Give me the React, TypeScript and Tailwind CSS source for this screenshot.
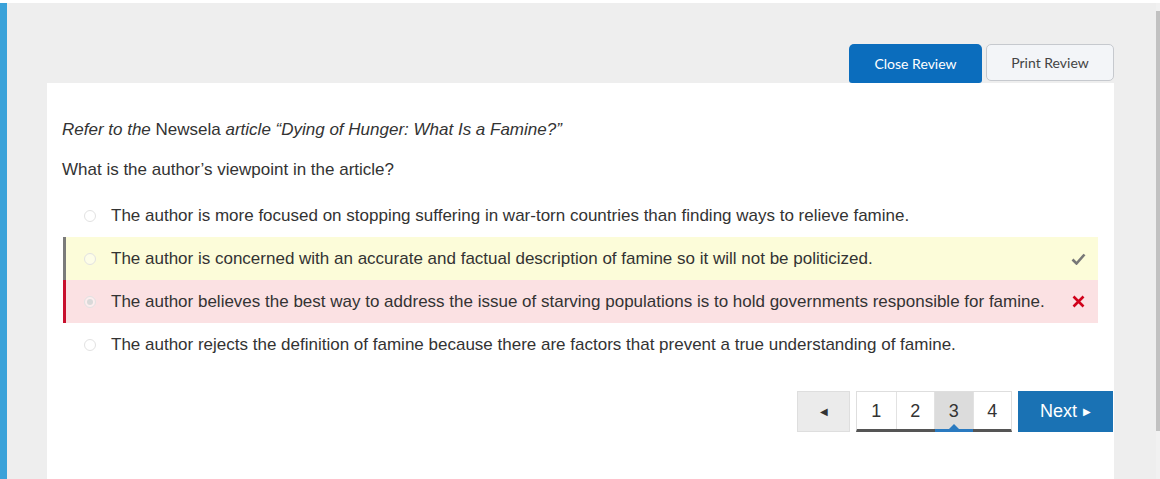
import React from 'react';

const options = [
  { text: 'The author is more focused on stopping suffering in war-torn countries than finding ways to relieve famine.', state: 'none' },
  { text: 'The author is concerned with an accurate and factual description of famine so it will not be politicized.', state: 'correct' },
  { text: 'The author believes the best way to address the issue of starving populations is to hold governments responsible for famine.', state: 'wrong' },
  { text: 'The author rejects the definition of famine because there are factors that prevent a true understanding of famine.', state: 'none' },
];

const Radio: React.FC<{ checked?: boolean }> = ({ checked }) => (
  <span className="w-[12px] h-[12px] rounded-full border border-[#e2e2e2] bg-white/40 flex items-center justify-center shrink-0">
    {checked && <span className="w-[6px] h-[6px] rounded-full bg-[#d9d9d9]" />}
  </span>
);

const App: React.FC = () => {
  return (
    <div className="w-[1160px] h-[479px] flex flex-col bg-white overflow-hidden" style={{ fontFamily: '"Liberation Sans", Arial, sans-serif' }}>
      <div className="h-[3px] bg-white shrink-0" />
      <div className="flex flex-1 min-h-0">
        {/* left accent */}
        <div className="w-[7px] bg-[#3aa2d9] shrink-0" />

        {/* gray workspace */}
        <div className="flex-1 bg-[#eeeeee] pl-[40px] pr-[42px] pt-[41px] flex flex-col min-h-0">
          <div className="flex justify-end gap-[4px] h-[39px] relative z-10" style={{ fontFamily: 'Lato, "Liberation Sans", sans-serif' }}>
            <button className="w-[133px] h-[39px] bg-[#0b6dbd] text-white text-[14px] rounded-[5px] rounded-b-[3px]">
              Close Review
            </button>
            <button className="w-[128px] h-[37px] bg-[#f3f5f8] text-[#444] text-[14px] border border-[#c6c9ce] rounded-[5px]">
              Print Review
            </button>
          </div>

          {/* card */}
          <div className="flex-1 bg-white pl-[15px] pr-[16px] pt-[37px] text-[#333] text-[17px]">
            <p className="leading-[20px] italic">
              Refer to the <span className="not-italic">Newsela</span> article “Dying of Hunger: What Is a Famine?”
            </p>
            <p className="leading-[20px] mt-[20px]">What is the author’s viewpoint in the article?</p>

            <div className="mt-[14px] flex flex-col">
              {options.map((o, i) => (
                <div
                  key={i}
                  className={`h-[43px] flex items-center pl-[18px] pr-[10px] ml-[1px] border-l-[3px] ${
                    o.state === 'correct'
                      ? 'bg-[#fcfcd9] border-[#7b7b7b]'
                      : o.state === 'wrong'
                      ? 'bg-[#fbe1e3] border-[#c8102e]'
                      : 'border-transparent'
                  }`}
                >
                  <Radio checked={o.state === 'wrong'} />
                  <span className="ml-[15px] flex-1 whitespace-nowrap">{o.text}</span>
                  {o.state === 'correct' && (
                    <svg width="15" height="12" viewBox="0 0 15 12" className="mr-[2px]">
                      <path d="M1.5 6.5 L5.5 10.5 L13.5 1.5" fill="none" stroke="#777" strokeWidth="2.6" />
                    </svg>
                  )}
                  {o.state === 'wrong' && (
                    <svg width="13" height="13" viewBox="0 0 13 13" className="mr-[3px]">
                      <path d="M1.5 1.5 L11.5 11.5 M11.5 1.5 L1.5 11.5" fill="none" stroke="#d0021b" strokeWidth="2.6" />
                    </svg>
                  )}
                </div>
              ))}
            </div>

            {/* pagination */}
            <div className="mt-[25px] -mr-[15px] flex justify-end gap-[6px] text-[18px]">
              <button className="w-[53px] h-[41px] bg-[#ebebeb] border border-[#dedede] text-[#333] text-[10px] flex items-center justify-center">
                ◀
              </button>
              <div className="flex h-[41px] border border-[#dedede] border-b-[3px] border-b-[#555] relative">
                {[1, 2, 3, 4].map((n) => (
                  <div
                    key={n}
                    className={`w-[38.5px] h-full flex items-center justify-center relative ${
                      n === 3 ? 'bg-[#dcdcdc]' : 'bg-white'
                    } ${n > 1 ? 'border-l border-l-[#e2e2e2]' : ''}`}
                  >
                    <span className="text-[#333] mt-[2px]">{n}</span>
                    {n === 3 && (
                      <>
                        <span className="absolute -bottom-[3px] left-0 right-0 h-[3px] bg-[#2a7ac0]" />
                        <span className="absolute bottom-0 left-1/2 -translate-x-1/2 w-0 h-0 border-l-[5px] border-r-[5px] border-b-[5px] border-l-transparent border-r-transparent border-b-[#2a7ac0]" />
                      </>
                    )}
                  </div>
                ))}
              </div>
              <button className="w-[95px] h-[41px] bg-[#1a72b4] text-white flex items-center justify-center gap-[6px]">
                <span>Next</span>
                <span className="text-[10px]">▶</span>
              </button>
            </div>
          </div>
        </div>

        {/* scrollbar */}
        <div className="w-[4px] bg-[#f1f1f1] shrink-0 flex flex-col pt-[8px]">
          <div className="h-[420px] bg-[#c1c1c1]" />
        </div>
      </div>
    </div>
  );
};

export default App;
